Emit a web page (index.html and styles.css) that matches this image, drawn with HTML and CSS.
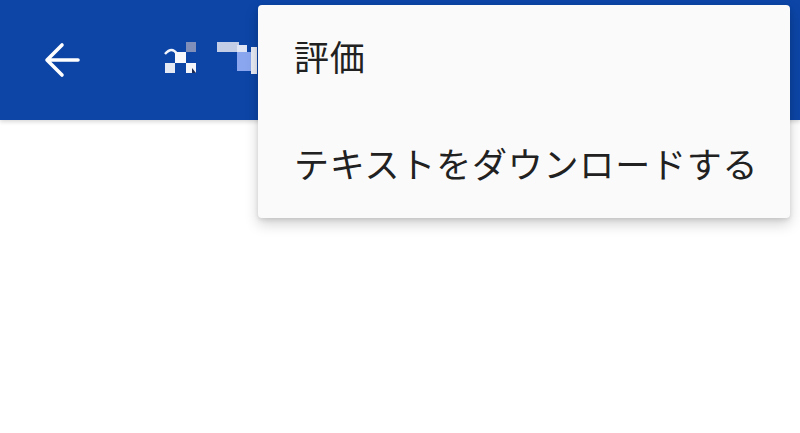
FILE: index.html
```html
<!DOCTYPE html>
<html lang="ja">
<head>
    <meta charset="UTF-8">
    <meta name="viewport" content="width=device-width, initial-scale=1.0">
    <title>メニュー</title>
    <link rel="stylesheet" href="styles.css">
</head>
<body>
    <header class="app-bar">
        <button class="back-button" aria-label="戻る">
            <svg width="40" height="40" viewBox="0 0 40 40">
                <path d="M36 20H6M20 5L5 20l15 15" fill="none" stroke="#fff" stroke-width="3.6" stroke-linecap="round" stroke-linejoin="round"/>
            </svg>
        </button>
        <!-- title is pixelated in the source -->
        <svg class="title-mosaic" width="100" height="40" viewBox="0 0 100 40">
            <path d="M1 12 q7 -8 12 0" fill="none" stroke="#f2f4fb" stroke-width="2.4"/>
            <rect x="22" y="0" width="10" height="10" fill="#7f8fb9"/>
            <rect x="11" y="10" width="11" height="11" fill="#f7f8fc"/>
            <rect x="1" y="21" width="10" height="10" fill="#e4e8f3"/>
            <rect x="22" y="21" width="10" height="10" fill="#f4f5fa"/>
            <path d="M28 26 l4 5 h-4 z" fill="#1b2a55"/>
            <rect x="53" y="0" width="22" height="10" fill="#c3cde6"/>
            <rect x="73" y="3" width="10" height="7" fill="#dfe5f5"/>
            <rect x="73" y="10" width="14" height="19" fill="#8aa6ef"/>
            <rect x="87" y="5" width="6" height="27" fill="#e9ecf5"/>
        </svg>
    </header>

    <main class="content"></main>

    <ul class="overflow-menu">
        <li class="menu-item">評価</li>
        <li class="menu-item">テキストをダウンロードする</li>
    </ul>
</body>
</html>
```

FILE: styles.css
```css
body {
    margin: 0;
    width: 800px;
    height: 433px;
    overflow: hidden;
    background-color: #ffffff;
    font-family: "Noto Sans CJK JP", "Noto Sans", sans-serif;
    position: relative;
}

.app-bar {
    height: 120px;
    background-color: #0c45a6;
    display: flex;
    align-items: center;
    box-shadow: 0 2px 4px rgba(0, 0, 0, 0.15);
}

.back-button {
    margin-left: 42px;
    width: 40px;
    height: 40px;
    padding: 0;
    border: none;
    background: none;
    display: flex;
}

.title-mosaic {
    margin-left: 82px;
    margin-top: 3px;
}

.overflow-menu {
    position: absolute;
    top: 5px;
    left: 258px;
    width: 532px;
    margin: 0;
    padding: 0;
    list-style: none;
    background-color: #fafafa;
    border-radius: 4px;
    box-shadow: 0 6px 14px rgba(0, 0, 0, 0.18), 0 2px 4px rgba(0, 0, 0, 0.1);
}

.menu-item {
    height: 106.5px;
    box-sizing: border-box;
    padding-bottom: 5px;
    display: flex;
    align-items: center;
    padding-left: 36px;
    font-size: 35px;
    letter-spacing: 0.8px;
    color: #212121;
}
```
